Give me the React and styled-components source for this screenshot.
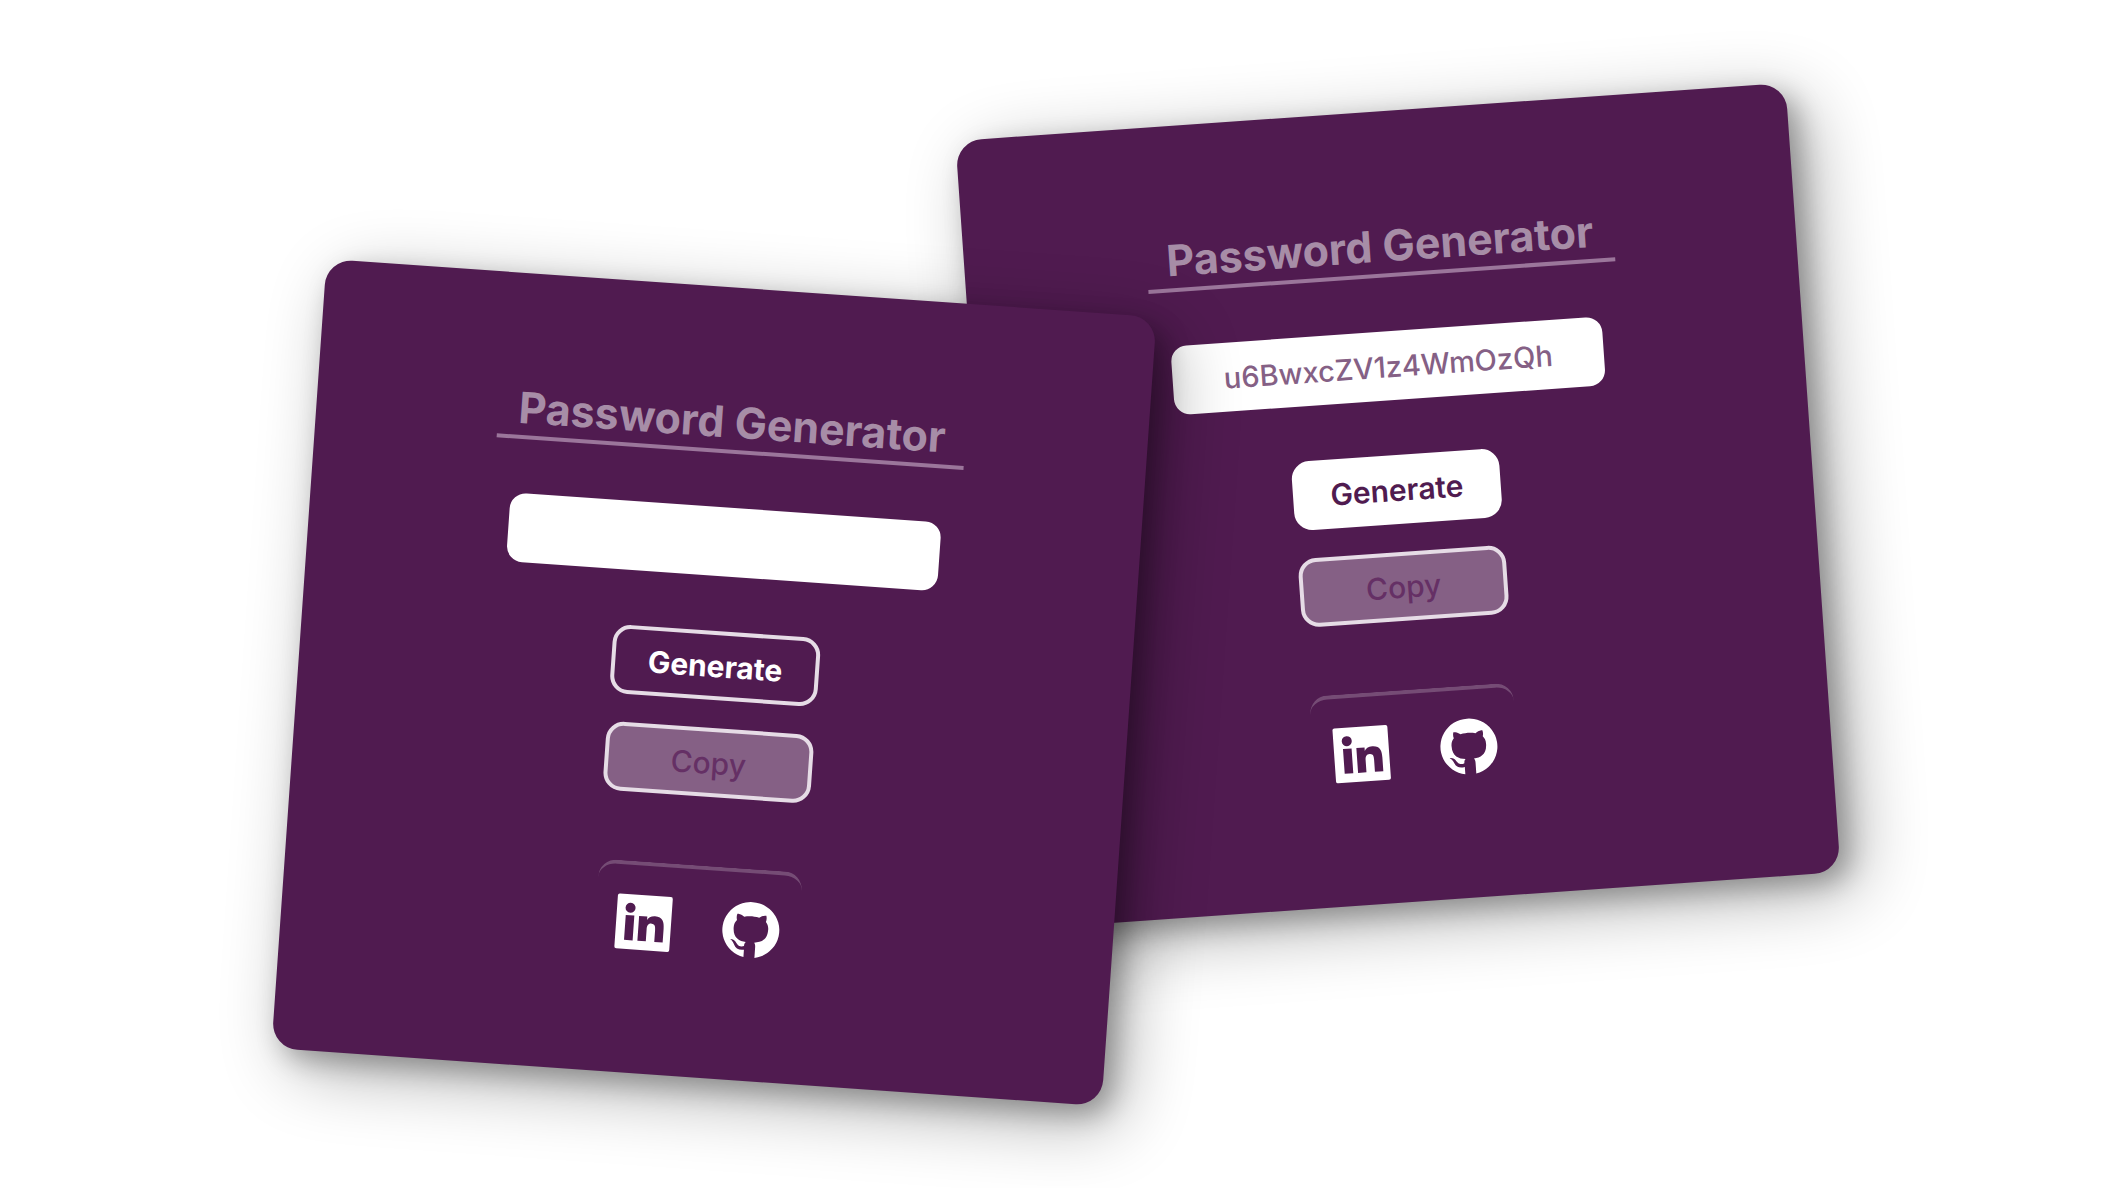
import React from "react";
import styled, { createGlobalStyle, css } from "styled-components";

const GlobalStyle = createGlobalStyle`
  *, *::before, *::after { box-sizing: border-box; }
  body {
    margin: 0;
    background: #ffffff;
    font-family: Inter, "Liberation Sans", sans-serif;
  }
`;

const Stage = styled.main`
  display: flex;
  justify-content: center;
  align-items: center;
  min-height: 100vh;
  overflow: hidden;
`;

const Card = styled.section`
  flex: 0 1 832px;
  display: flex;
  flex-direction: column;
  align-items: center;
  padding: 108px 24px 119px;
  border-radius: 26px;
  background: #501b50;
  box-shadow:
    10px 10px 26px rgba(0, 0, 0, 0.28),
    18px 18px 70px rgba(0, 0, 0, 0.32);
  ${({ $front }) =>
    $front
      ? css`
          z-index: 1;
          margin: 176px -148px 0 0;
          transform: rotate(4deg);
        `
      : css`
          margin-bottom: 176px;
          transform: rotate(-4deg);
        `}
`;

const Title = styled.h1`
  width: 468px;
  max-width: 100%;
  margin: 0 0 54px;
  padding-bottom: 2px;
  border-bottom: 4px solid #9b769b;
  color: #a78da7;
  font-size: 43px;
  font-weight: 700;
  line-height: 52px;
  text-align: center;
  white-space: nowrap;
`;

const PasswordField = styled.input`
  width: 432px;
  max-width: 100%;
  height: 69px;
  margin-bottom: 55px;
  padding: 2px 16px 0;
  border: 0;
  border-radius: 16px;
  background: #ffffff;
  color: #856085;
  font: 500 29px/36px Inter, "Liberation Sans", sans-serif;
  text-align: center;
`;

const Actions = styled.div`
  display: flex;
  flex-direction: column;
  gap: 28px;
  margin-bottom: 69px;
`;

const Button = styled.button`
  width: 208px;
  height: 69px;
  padding: 0;
  border: 4px solid ${({ $filled }) => ($filled ? "#ffffff" : "#e6dce6")};
  border-radius: 18px;
  background: ${({ $filled }) => ($filled ? "#ffffff" : "transparent")};
  color: ${({ $filled }) => ($filled ? "#501b50" : "#ffffff")};
  font: ${({ $filled }) => ($filled ? 600 : 700)} 30px/36px Inter, "Liberation Sans", sans-serif;

  &:disabled {
    background: #856085;
    color: #653065;
    font-weight: 500;
  }
`;

const Social = styled.footer`
  display: flex;
  justify-content: center;
  gap: 43px;
  width: 204px;
  padding-top: 25px;
  border-top: 4px solid #754c75;
  border-radius: 18px;
`;

const SocialLink = styled.a`
  flex: none;
  color: #ffffff;
`;

const Icon = styled.svg`
  display: block;
  width: 64px;
  height: 64px;
  fill: currentColor;
`;

const LinkedInIcon = () => (
  <Icon viewBox="0 0 64 64" aria-hidden="true">
    <path
      fillRule="evenodd"
      d="M6 4.500H57a2 2 0 0 1 2 2V57.500a2 2 0 0 1-2 2H6a2 2 0 0 1-2-2V6.500a2 2 0 0 1 2-2Z
         M17.500 13a5 5 0 1 0 0 10a5 5 0 1 0 0-10Z
         M13.200 25.600V50.500h8.600V25.600Z
         M26.600 25.600V50.500h8.400V38.200c0-2.900.9-5.800 4.500-5.800c3.800 0 4 3.200 4 6V50.500h8.400V36.800c0-6.800-1.500-11.900-9.400-11.900c-3.900 0-6.600 2-7.700 4.100V25.600Z"
    />
  </Icon>
);

const GitHubIcon = () => (
  <Icon viewBox="0 0 64 64" aria-hidden="true">
    <path
      d="M26.500 59.400A28.500 28 0 1 1 37.500 59.400V48.500
         C37.500 46.500 37 45.200 36.200 44.200
         C43 43.400 49.300 41 49.300 30.200
         C49.300 27 48.200 24.600 46.500 22.700
         C47 21 47.300 19 46.500 16.600
         C46.500 16.600 44 16 39.500 19
         C34.600 17.800 29.400 17.800 24.500 19
         C20 16 17.500 16.600 17.500 16.600
         C16.700 19 17 21 17.500 22.700
         C15.800 24.600 14.700 27 14.700 30.200
         C14.700 41 21 43.400 27.800 44.200
         C26.800 45 26.400 46.200 26.300 48.200
         C24 49.400 20.500 49.200 18.500 45.800
         C17 43 14.800 42 12 42.200
         C14.500 43.800 15.300 45.500 16.300 47.500
         C18 51.500 21.500 53 26.500 52Z"
    />
  </Icon>
);

function GeneratorCard({ password, front, pressed }) {
  return (
    <Card $front={front}>
      <Title>Password Generator</Title>
      <PasswordField type="text" aria-label="Generated password" value={password} readOnly />
      <Actions>
        <Button type="button" $filled={pressed}>Generate</Button>
        <Button type="button" disabled>Copy</Button>
      </Actions>
      <Social>
        <SocialLink href="#linkedin" aria-label="LinkedIn"><LinkedInIcon /></SocialLink>
        <SocialLink href="#github" aria-label="GitHub"><GitHubIcon /></SocialLink>
      </Social>
    </Card>
  );
}

export default function App() {
  return (
    <>
      <GlobalStyle />
      <Stage>
        <GeneratorCard front password="" />
        <GeneratorCard pressed password="u6BwxcZV1z4WmOzQh" />
      </Stage>
    </>
  );
}
